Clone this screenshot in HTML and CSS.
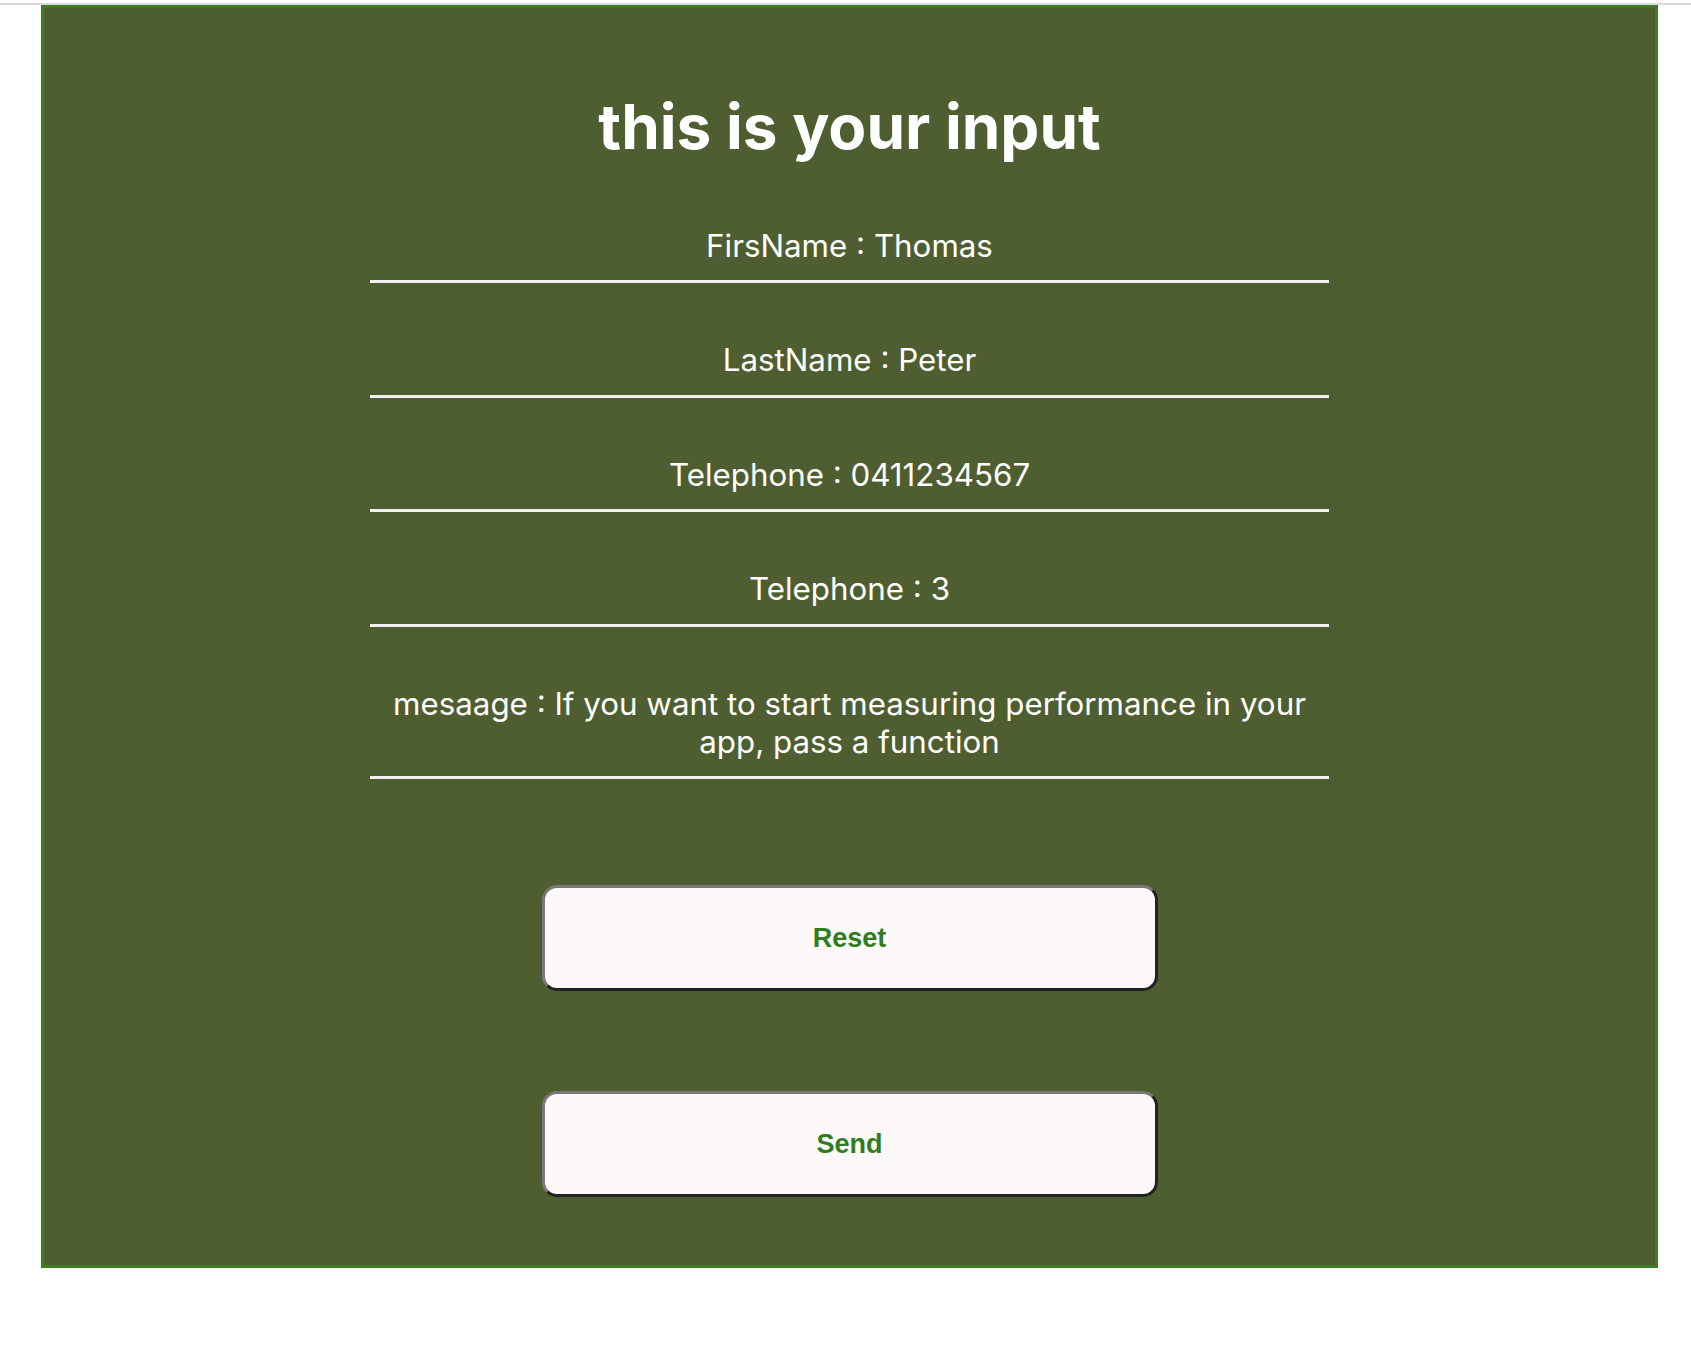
FILE: index.html
```html
<!DOCTYPE html>
<html>
<head>
<meta charset="utf-8">
<link rel="stylesheet" href="styles.css">
</head>
<body>
<div class="topline"></div>
<div class="panel">
  <h1 class="title">this is your input</h1>
  <div class="fields">
    <p class="field">FirsName : Thomas</p>
    <p class="field">LastName : Peter</p>
    <p class="field">Telephone : 0411234567</p>
    <p class="field">Telephone : 3</p>
    <p class="field">mesaage : If you want to start measuring performance in your app, pass a function</p>
  </div>
  <div class="actions">
    <button class="btn">Reset</button>
    <button class="btn">Send</button>
  </div>
</div>
</body>
</html>
```

FILE: styles.css
```css
html, body {
  margin: 0;
  padding: 0;
  background: #ffffff;
}

.topline {
  height: 2px;
  margin-top: 3px;
  background: #d9d9d9;
}

.panel {
  margin: 0 33px 0 41px;
  border: 3px solid #3a7f22;
  background: #4e5e30;
  padding: 81px 0 68px;
  box-shadow: 0 1px 0 #9fae92;
  font-family: Inter, "Noto Sans", sans-serif;
  color: #ffffff;
}

.title {
  margin: 0;
  text-align: center;
  font-size: 62px;
  line-height: 76px;
  font-weight: 700;
}

.fields {
  width: 959px;
  margin: 62px auto 0;
}

.field {
  margin: 0 0 58px;
  padding: 0 0 15px;
  border-bottom: 3px solid #f2f2f2;
  text-align: center;
  font-size: 31.3px;
  line-height: 38.4px;
  font-weight: 400;
}

.actions {
  display: flex;
  flex-direction: column;
  align-items: center;
  gap: 100px;
  margin-top: 106px;
}

.btn {
  width: 616px;
  height: 106px;
  box-sizing: border-box;
  background: #fdf9f9;
  border: 3px solid;
  border-color: #787878 #222222 #222222 #787878;
  border-radius: 15px;
  font-family: "Liberation Sans", Arial, sans-serif;
  font-weight: 700;
  font-size: 27px;
  color: #2f7d1f;
}
```
